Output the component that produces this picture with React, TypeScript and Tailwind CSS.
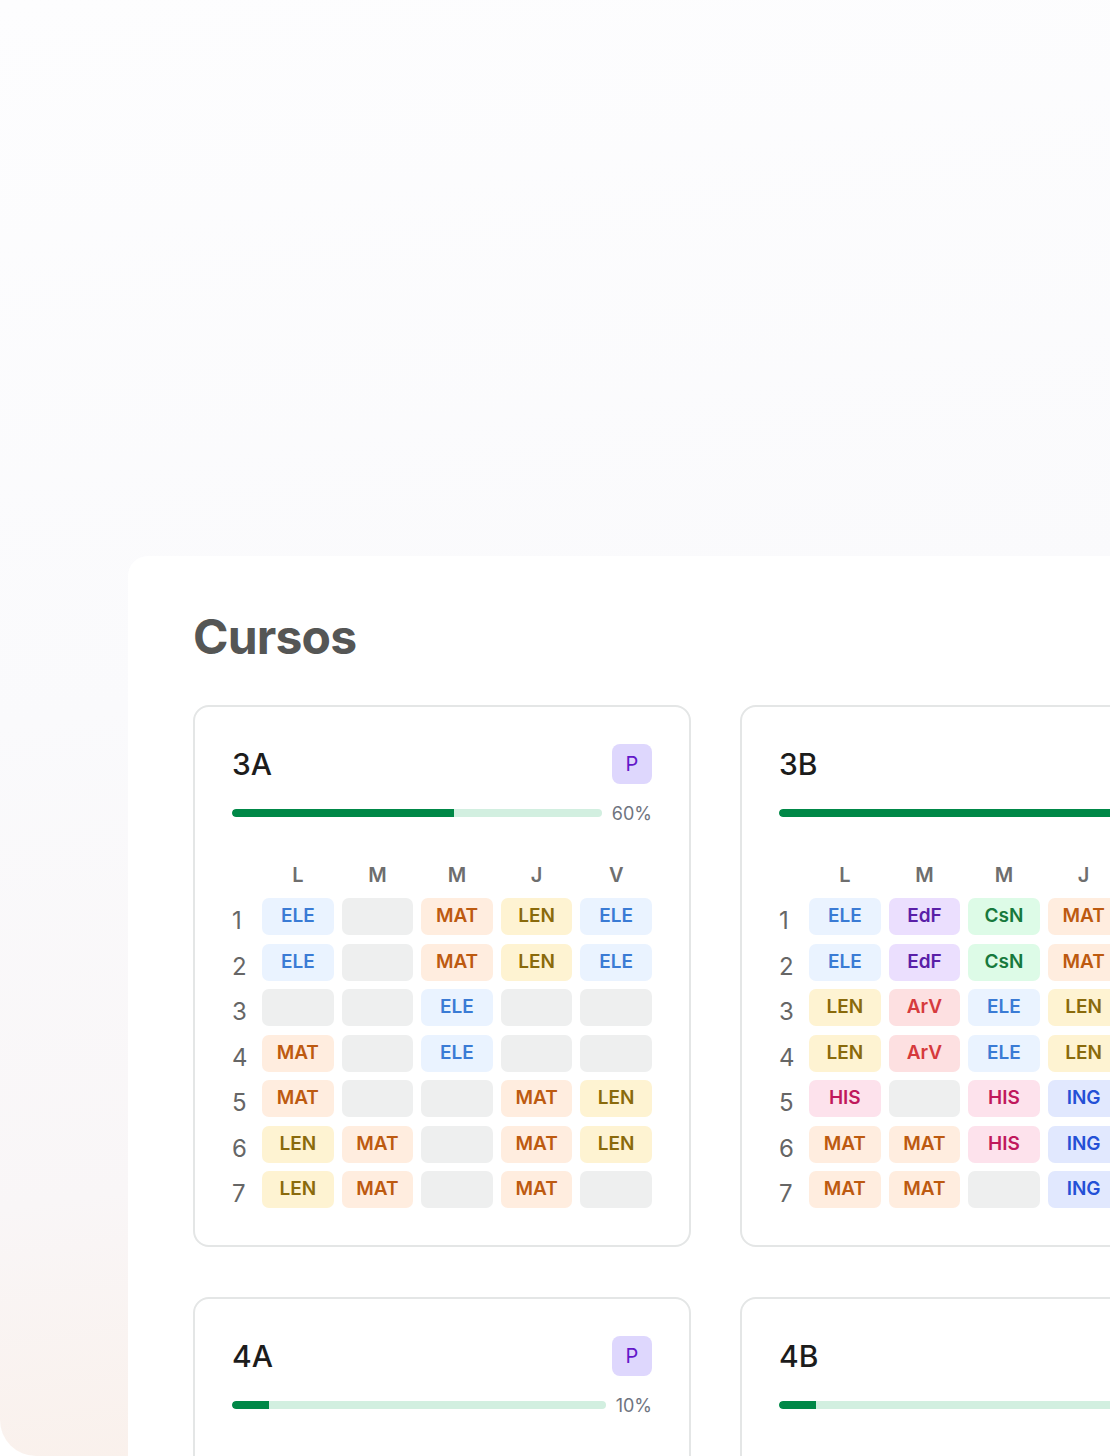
import React from "react";

type Subject = "ELE" | "MAT" | "LEN" | "EdF" | "CsN" | "ArV" | "HIS" | "ING" | null;

interface Course {
  name: string;
  progress: number;
  badge?: string;
  grid: Subject[][];
}

const subjectStyles: Record<Exclude<Subject, null>, string> = {
  ELE: "bg-[#eaf3ff] text-[#3a7bd5]",
  MAT: "bg-[#ffeddf] text-[#bd5a10]",
  LEN: "bg-[#fef3d2] text-[#8a6a0b]",
  EdF: "bg-[#ebdffe] text-[#5a1fa8]",
  CsN: "bg-[#ddfbe7] text-[#17793d]",
  ArV: "bg-[#fde0e1] text-[#d63a3d]",
  HIS: "bg-[#fde2ec] text-[#c0185c]",
  ING: "bg-[#e1e8fe] text-[#2450d6]",
};

const days = ["L", "M", "M", "J", "V"];

const courses: Course[] = [
  {
    name: "3A",
    progress: 60,
    badge: "P",
    grid: [
      ["ELE", null, "MAT", "LEN", "ELE"],
      ["ELE", null, "MAT", "LEN", "ELE"],
      [null, null, "ELE", null, null],
      ["MAT", null, "ELE", null, null],
      ["MAT", null, null, "MAT", "LEN"],
      ["LEN", "MAT", null, "MAT", "LEN"],
      ["LEN", "MAT", null, "MAT", null],
    ],
  },
  {
    name: "3B",
    progress: 100,
    grid: [
      ["ELE", "EdF", "CsN", "MAT", "LEN"],
      ["ELE", "EdF", "CsN", "MAT", "LEN"],
      ["LEN", "ArV", "ELE", "LEN", "MAT"],
      ["LEN", "ArV", "ELE", "LEN", "MAT"],
      ["HIS", null, "HIS", "ING", "ELE"],
      ["MAT", "MAT", "HIS", "ING", "ELE"],
      ["MAT", "MAT", null, "ING", null],
    ],
  },
  {
    name: "4A",
    progress: 10,
    badge: "P",
    grid: [
      ["MAT", null, null, null, "LEN"],
      ["MAT", null, null, null, "LEN"],
      [null, null, null, null, null],
      [null, null, null, null, null],
      [null, null, null, null, null],
      [null, null, null, null, null],
      [null, null, null, null, null],
    ],
  },
  {
    name: "4B",
    progress: 10,
    grid: [
      [null, "MAT", null, null, null],
      [null, "MAT", null, null, null],
      [null, null, null, null, null],
      [null, null, null, null, null],
      [null, null, null, null, null],
      [null, null, null, null, null],
      [null, null, null, null, null],
    ],
  },
];

const Cell: React.FC<{ subject: Subject }> = ({ subject }) => {
  if (!subject) return <div className="h-[37px] rounded-[7px] bg-[#eeefef]" />;
  return (
    <div
      className={`flex h-[37px] items-center justify-center rounded-[7px] text-[19px] font-semibold ${subjectStyles[subject]}`}
    >
      {subject}
    </div>
  );
};

const CourseCard: React.FC<{ course: Course }> = ({ course }) => (
  <div className="rounded-[16px] border-2 border-[#e4e6e6] bg-white p-[37px]">
    <div className="flex h-10 items-center justify-between">
      <span className="text-[30px] font-medium text-[#1c1c1c]">{course.name}</span>
      {course.badge && (
        <span className="flex h-10 w-10 items-center justify-center rounded-[8px] bg-[#ded7fd] text-[20px] text-[#6317c9]">
          {course.badge}
        </span>
      )}
    </div>

    <div className="mt-[17px] flex h-6 items-center gap-[10px]">
      <div className="h-2 flex-1 overflow-hidden rounded-full bg-[#d2efe0]">
        <div className="h-full rounded-l-full bg-[#008847]" style={{ width: `${course.progress}%` }} />
      </div>
      <span className="text-[18px] text-[#6f7480]">{course.progress}%</span>
    </div>

    <div className="mt-[37.5px] grid grid-cols-[22px_repeat(5,minmax(0,1fr))] gap-x-2">
      <div />
      {days.map((d, i) => (
        <div key={i} className="h-6 text-center text-[20px] leading-6 font-semibold text-[#6e6e6e]">
          {d}
        </div>
      ))}
    </div>

    <div className="mt-[11.5px] flex flex-col gap-[8.5px]">
      {course.grid.map((row, r) => (
        <div key={r} className="grid grid-cols-[22px_repeat(5,minmax(0,1fr))] gap-x-2">
          <div className="h-[37px] pt-2 text-[24px] leading-[29px] text-[#666666]">{r + 1}</div>
          {row.map((s, c) => (
            <Cell key={c} subject={s} />
          ))}
        </div>
      ))}
    </div>
  </div>
);

export default function App() {
  return (
    <div className="h-[1456px] w-[1110px] overflow-hidden bg-white font-['Inter','Noto_Sans',sans-serif]">
      <div className="h-full rounded-bl-[36px] bg-[linear-gradient(172deg,#fdfdfe_0%,#fafafc_45%,#f9f6f7_75%,#faeee6_100%)] pt-[556px] pl-[128px]">
        <div className="h-full w-[1100px] rounded-tl-[20px] bg-white pt-[57px] pl-[65px]">
          <h1 className="text-[48px] leading-[48px] font-bold tracking-[-0.8px] text-[#555655]">Cursos</h1>
          <div className="mt-[44px] grid w-[1045px] grid-cols-[498px_498px] gap-x-[49px] gap-y-[50px]">
            {courses.map((c) => (
              <CourseCard key={c.name} course={c} />
            ))}
          </div>
        </div>
      </div>
    </div>
  );
}
